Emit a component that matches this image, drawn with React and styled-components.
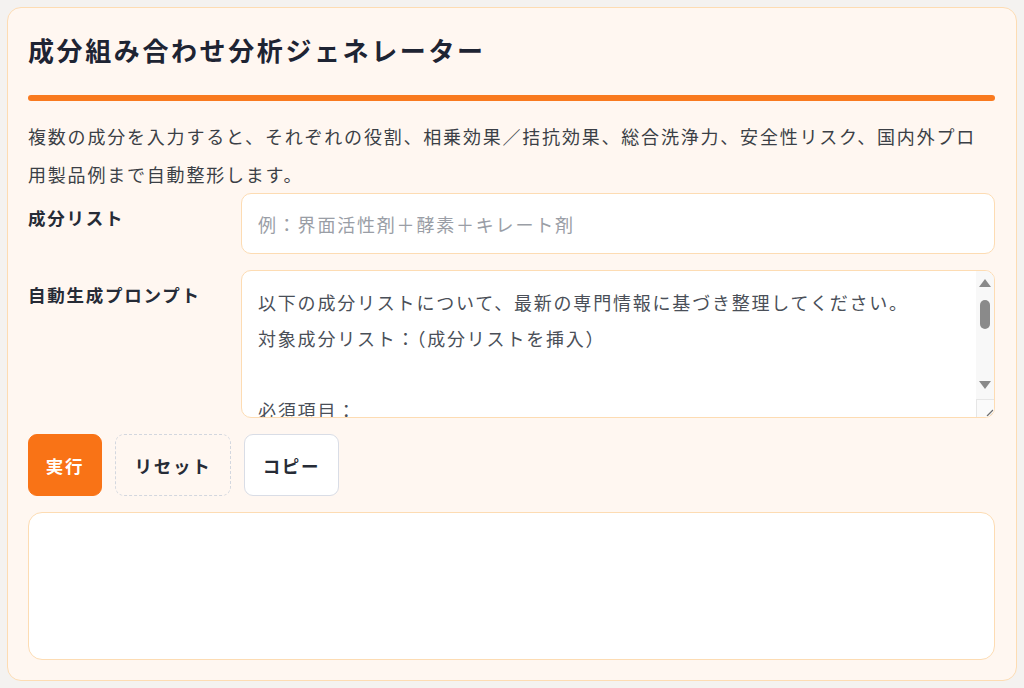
import React from "react";
import styled, { createGlobalStyle } from "styled-components";

const GlobalStyle = createGlobalStyle`
  html, body {
    margin: 0;
    padding: 0;
    background: #f4f2f0;
  }
  body {
    font-family: "Noto Sans CJK JP", "Noto Sans", sans-serif;
  }
  * {
    box-sizing: border-box;
  }
`;

const promptText = `以下の成分リストについて、最新の専門情報に基づき整理してください。
対象成分リスト：（成分リストを挿入）

必須項目：
1. 各成分の役割
2. 相乗効果／拮抗効果
3. 総合洗浄力
4. 安全性リスク
5. 国内外プロ用製品例`;

function App() {
  return (
    <>
      <GlobalStyle />
      <Page>
        <Card>
          <Title>成分組み合わせ分析ジェネレーター</Title>
          <Bar />
          <Desc>
            複数の成分を入力すると、それぞれの役割、相乗効果／拮抗効果、総合洗浄力、安全性リスク、国内外プロ用製品例まで自動整形します。
          </Desc>
          <Form>
            <Label>成分リスト</Label>
            <Input placeholder="例：界面活性剤＋酵素＋キレート剤" />
            <Label>自動生成プロンプト</Label>
            <PromptBox>
              <Prompt defaultValue={promptText} />
              <Rail>
                <Arrow>
                  <svg width="12" height="8" viewBox="0 0 12 8">
                    <path d="M6 0 L12 8 L0 8 Z" fill="#8a8a8a" />
                  </svg>
                </Arrow>
                <Thumb />
                <Arrow>
                  <svg width="12" height="8" viewBox="0 0 12 8">
                    <path d="M0 0 L12 0 L6 8 Z" fill="#8a8a8a" />
                  </svg>
                </Arrow>
                <Corner>
                  <svg width="10" height="10" viewBox="0 0 10 10">
                    <path d="M9 3 L3 9 M9 6.5 L6.5 9" stroke="#6e6e6e" strokeWidth="1.2" fill="none" />
                  </svg>
                </Corner>
              </Rail>
            </PromptBox>
          </Form>
          <Buttons>
            <Button $variant="primary" $w={74}>実行</Button>
            <Button $variant="dashed" $w={116}>リセット</Button>
            <Button $variant="outline" $w={95}>コピー</Button>
          </Buttons>
          <Output />
        </Card>
      </Page>
    </>
  );
}

export default App;

const Page = styled.div`
  padding: 7px;
  min-height: 688px;
`;

const Card = styled.div`
  width: 1010px;
  background: #fff7f1;
  border: 1px solid #fddcb3;
  border-radius: 14px;
  padding: 22px 21px 20px 20px;
  display: flex;
  flex-direction: column;
`;

const Title = styled.h1`
  margin: 0;
  font-size: 26px;
  line-height: 40px;
  font-weight: 700;
  letter-spacing: 0.1em;
  color: #1e2433;
`;

const Bar = styled.div`
  height: 6px;
  border-radius: 3px;
  background: #f97a1f;
  margin: 25px 0 16px;
`;

const Desc = styled.p`
  margin: 0;
  font-size: 18px;
  line-height: 38px;
  letter-spacing: 0.1em;
  color: #3b3f46;
`;

const Form = styled.div`
  display: grid;
  grid-template-columns: 200px 1fr;
  column-gap: 13px;
  row-gap: 16px;
`;

const Label = styled.label`
  font-size: 17.5px;
  font-weight: 700;
  letter-spacing: 0.1em;
  color: #262b36;
  padding-top: 10px;
  line-height: 30px;
`;

const Input = styled.input`
  height: 61px;
  width: 100%;
  border: 1px solid #fddcb3;
  border-radius: 10px;
  background: #fff;
  padding: 0 16px;
  font-family: inherit;
  font-size: 18px;
  letter-spacing: 0.1em;
  color: #3b3f46;
  outline: none;
  &::placeholder {
    color: #9a9ea6;
  }
`;

const PromptBox = styled.div`
  height: 148px;
  display: flex;
  border: 1px solid #fddcb3;
  border-radius: 10px;
  background: #fff;
  overflow: hidden;
`;

const Prompt = styled.textarea`
  flex: 1;
  min-width: 0;
  height: 100%;
  border: none;
  background: transparent;
  padding: 13px 16px;
  font-family: inherit;
  font-size: 18px;
  line-height: 36px;
  letter-spacing: 0.1em;
  color: #4a4f58;
  outline: none;
  resize: none;
  overflow: hidden;
`;

const Rail = styled.div`
  width: 18px;
  display: flex;
  flex-direction: column;
  align-items: center;
  background: #f8f8f8;
`;

const Arrow = styled.div`
  height: 24px;
  width: 100%;
  display: flex;
  align-items: center;
  justify-content: center;
`;

const Thumb = styled.div`
  width: 10px;
  height: 29px;
  margin: 5px 0 auto;
  border-radius: 5px;
  background: #8a8a8a;
`;

const Corner = styled.div`
  width: 100%;
  height: 18px;
  margin-top: 2px;
  display: flex;
  align-items: flex-end;
  justify-content: flex-end;
  background: #fafafa;
  border-top: 1px solid #e6e6e6;
  border-left: 1px solid #e6e6e6;
`;

const Buttons = styled.div`
  display: flex;
  gap: 13px;
  margin-top: 16px;
`;

const variants = {
  primary: `
    background: #f97316;
    color: #fff;
    border: 1px solid #f97316;
  `,
  dashed: `
    background: transparent;
    color: #262b36;
    border: 1px dashed #d3d7df;
  `,
  outline: `
    background: #fff;
    color: #262b36;
    border: 1px solid #d9dde6;
  `,
};

const Button = styled.button`
  height: 62px;
  width: ${({ $w }) => $w}px;
  padding: 0;
  border-radius: 9px;
  font-family: inherit;
  font-size: 17.5px;
  font-weight: 700;
  letter-spacing: 0.1em;
  cursor: pointer;
  ${({ $variant }) => variants[$variant]}
`;

const Output = styled.div`
  margin-top: 16px;
  height: 148px;
  background: #fff;
  border: 1px solid #fddcb3;
  border-radius: 14px;
`;
